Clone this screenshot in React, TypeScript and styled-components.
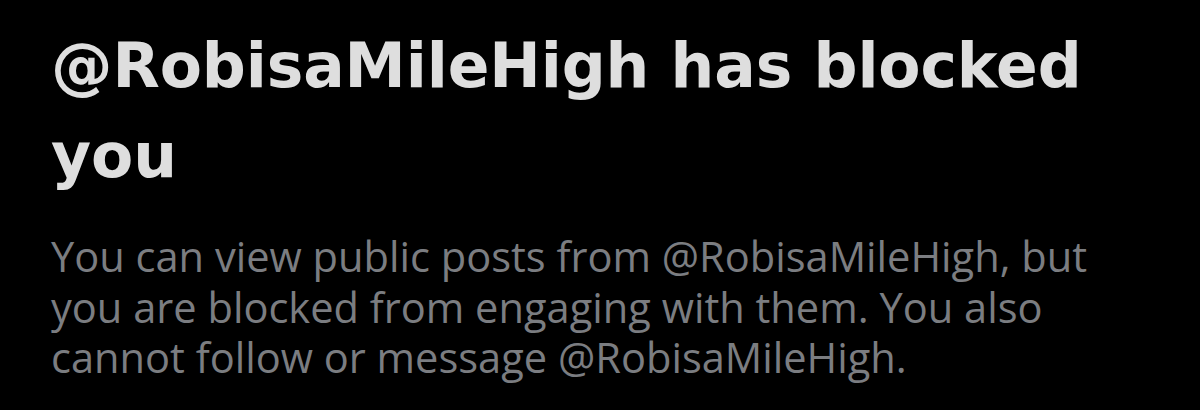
import React from "react";
import styled, { createGlobalStyle } from "styled-components";

const Global = createGlobalStyle`
  html, body { margin: 0; padding: 0; background: #000; }
  body { width: 1200px; height: 410px; overflow: hidden; }
`;

const Page = styled.main`
  box-sizing: border-box;
  width: 1200px;
  height: 410px;
  background: #000;
  padding: 21px 40px 0 51px;
  display: flex;
  flex-direction: column;
  gap: 30px;
`;

const Title = styled.h1`
  margin: 0;
  font-family: "DejaVu Sans", "Liberation Sans", sans-serif;
  font-weight: 700;
  font-size: 61.5px;
  line-height: 90px;
  letter-spacing: -0.1px;
  color: #dedede;
`;

const Body = styled.p`
  margin: 0;
  font-family: "Open Sans", "Liberation Sans", sans-serif;
  font-weight: 400;
  font-size: 41.6px;
  line-height: 50.5px;
  letter-spacing: 0px;
  color: #7b7d81;
`;

export default function App() {
  return (
    <>
      <Global />
      <Page>
        <Title>@RobisaMileHigh has blocked you</Title>
        <Body>
          You can view public posts from @RobisaMileHigh, but you are blocked from engaging with them. You also
          cannot follow or message @RobisaMileHigh.
        </Body>
      </Page>
    </>
  );
}
